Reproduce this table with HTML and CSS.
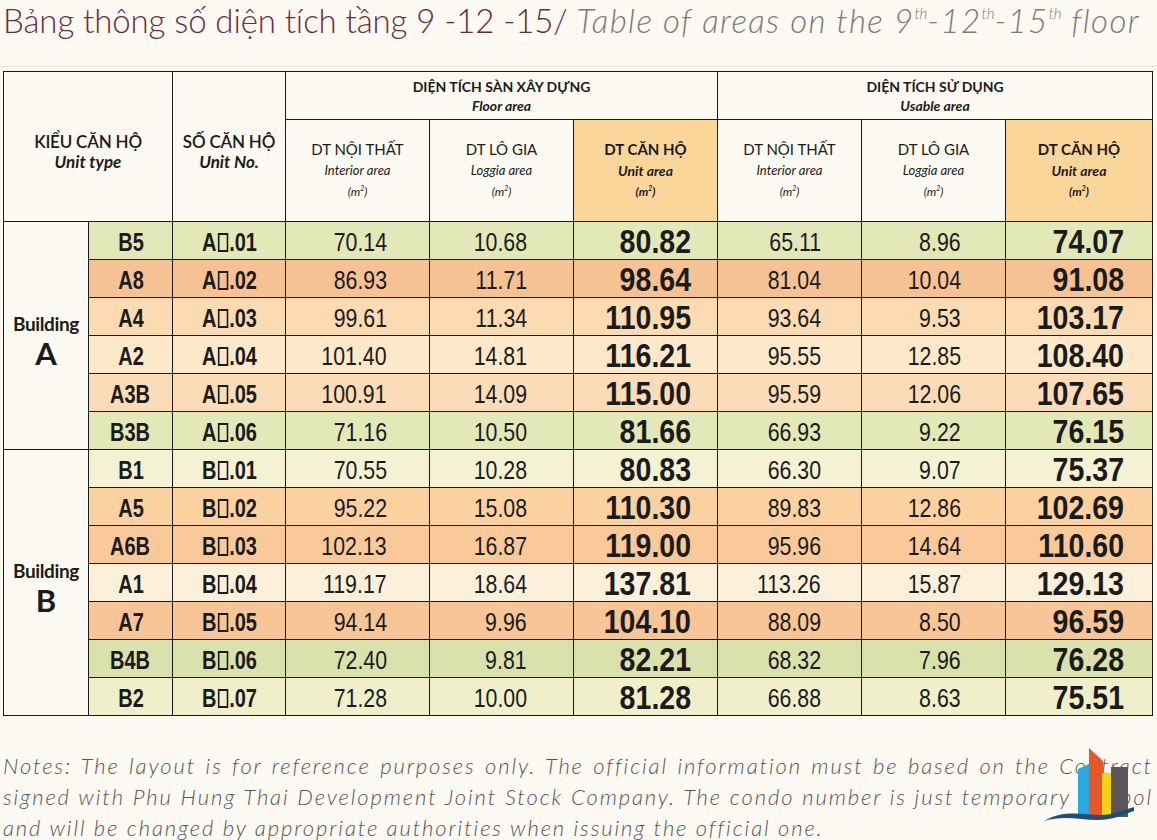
FILE: index.html
```html
<!DOCTYPE html>
<html lang="vi">
<head>
<meta charset="utf-8">
<title>Bảng thông số diện tích tầng 9-12-15</title>
<link rel="stylesheet" href="styles.css">
</head>
<body>
<div class="page">
  <h1 class="title"><span class="vi">Bảng thông số diện tích tầng 9 -12 -15/</span> <span class="en">Table of areas on the 9<sup>th</sup>-12<sup>th</sup>-15<sup>th</sup> floor</span></h1>
  <div class="rule"></div>
  <table class="areas">
    <colgroup>
      <col class="c-bld"><col class="c-type"><col class="c-no">
      <col class="c-v"><col class="c-v"><col class="c-v2">
      <col class="c-v"><col class="c-v"><col class="c-v3">
    </colgroup>
    <thead>
      <tr class="h1">
        <th colspan="2" rowspan="2" class="hd"><div class="hv">KIỂU CĂN HỘ</div><div class="he">Unit type</div></th>
        <th rowspan="2" class="hd"><div class="hv">SỐ CĂN HỘ</div><div class="he">Unit No.</div></th>
        <th colspan="3" class="grp"><div class="gv">DIỆN TÍCH SÀN XÂY DỰNG</div><div class="ge">Floor area</div></th>
        <th colspan="3" class="grp"><div class="gv">DIỆN TÍCH SỬ DỤNG</div><div class="ge">Usable area</div></th>
      </tr>
      <tr class="h2">
        <th class="sub"><div class="sv">DT NỘI THẤT</div><div class="se">Interior area</div><div class="su">(m<sup>2</sup>)</div></th>
        <th class="sub"><div class="sv">DT LÔ GIA</div><div class="se">Loggia area</div><div class="su">(m<sup>2</sup>)</div></th>
        <th class="sub hot"><div class="sv">DT CĂN HỘ</div><div class="se">Unit area</div><div class="su">(m<sup>2</sup>)</div></th>
        <th class="sub"><div class="sv">DT NỘI THẤT</div><div class="se">Interior area</div><div class="su">(m<sup>2</sup>)</div></th>
        <th class="sub"><div class="sv">DT LÔ GIA</div><div class="se">Loggia area</div><div class="su">(m<sup>2</sup>)</div></th>
        <th class="sub hot"><div class="sv">DT CĂN HỘ</div><div class="se">Unit area</div><div class="su">(m<sup>2</sup>)</div></th>
      </tr>
    </thead>
    <tbody>
      <tr class="g1"><td rowspan="6" class="bld"><div class="bw">Building</div><div class="bl">A</div></td><td class="ty"><span>B5</span></td><td class="no"><span>A<i class="box"></i>.01</span></td><td class="fi"><span>70.14</span></td><td class="fl"><span>10.68</span></td><td class="fu"><span>80.82</span></td><td class="ui"><span>65.11</span></td><td class="ul"><span>8.96</span></td><td class="uu"><span>74.07</span></td></tr>
      <tr class="o1"><td class="ty"><span>A8</span></td><td class="no"><span>A<i class="box"></i>.02</span></td><td class="fi"><span>86.93</span></td><td class="fl"><span>11.71</span></td><td class="fu"><span>98.64</span></td><td class="ui"><span>81.04</span></td><td class="ul"><span>10.04</span></td><td class="uu"><span>91.08</span></td></tr>
      <tr class="o2"><td class="ty"><span>A4</span></td><td class="no"><span>A<i class="box"></i>.03</span></td><td class="fi"><span>99.61</span></td><td class="fl"><span>11.34</span></td><td class="fu"><span>110.95</span></td><td class="ui"><span>93.64</span></td><td class="ul"><span>9.53</span></td><td class="uu"><span>103.17</span></td></tr>
      <tr class="o3"><td class="ty"><span>A2</span></td><td class="no"><span>A<i class="box"></i>.04</span></td><td class="fi"><span>101.40</span></td><td class="fl"><span>14.81</span></td><td class="fu"><span>116.21</span></td><td class="ui"><span>95.55</span></td><td class="ul"><span>12.85</span></td><td class="uu"><span>108.40</span></td></tr>
      <tr class="o4"><td class="ty"><span>A3B</span></td><td class="no"><span>A<i class="box"></i>.05</span></td><td class="fi"><span>100.91</span></td><td class="fl"><span>14.09</span></td><td class="fu"><span>115.00</span></td><td class="ui"><span>95.59</span></td><td class="ul"><span>12.06</span></td><td class="uu"><span>107.65</span></td></tr>
      <tr class="g1"><td class="ty"><span>B3B</span></td><td class="no"><span>A<i class="box"></i>.06</span></td><td class="fi"><span>71.16</span></td><td class="fl"><span>10.50</span></td><td class="fu"><span>81.66</span></td><td class="ui"><span>66.93</span></td><td class="ul"><span>9.22</span></td><td class="uu"><span>76.15</span></td></tr>
      <tr class="g2"><td rowspan="7" class="bld"><div class="bw">Building</div><div class="bl">B</div></td><td class="ty"><span>B1</span></td><td class="no"><span>B<i class="box"></i>.01</span></td><td class="fi"><span>70.55</span></td><td class="fl"><span>10.28</span></td><td class="fu"><span>80.83</span></td><td class="ui"><span>66.30</span></td><td class="ul"><span>9.07</span></td><td class="uu"><span>75.37</span></td></tr>
      <tr class="o5"><td class="ty"><span>A5</span></td><td class="no"><span>B<i class="box"></i>.02</span></td><td class="fi"><span>95.22</span></td><td class="fl"><span>15.08</span></td><td class="fu"><span>110.30</span></td><td class="ui"><span>89.83</span></td><td class="ul"><span>12.86</span></td><td class="uu"><span>102.69</span></td></tr>
      <tr class="o6"><td class="ty"><span>A6B</span></td><td class="no"><span>B<i class="box"></i>.03</span></td><td class="fi"><span>102.13</span></td><td class="fl"><span>16.87</span></td><td class="fu"><span>119.00</span></td><td class="ui"><span>95.96</span></td><td class="ul"><span>14.64</span></td><td class="uu"><span>110.60</span></td></tr>
      <tr class="o7"><td class="ty"><span>A1</span></td><td class="no"><span>B<i class="box"></i>.04</span></td><td class="fi"><span>119.17</span></td><td class="fl"><span>18.64</span></td><td class="fu"><span>137.81</span></td><td class="ui"><span>113.26</span></td><td class="ul"><span>15.87</span></td><td class="uu"><span>129.13</span></td></tr>
      <tr class="o8"><td class="ty"><span>A7</span></td><td class="no"><span>B<i class="box"></i>.05</span></td><td class="fi"><span>94.14</span></td><td class="fl"><span>9.96</span></td><td class="fu"><span>104.10</span></td><td class="ui"><span>88.09</span></td><td class="ul"><span>8.50</span></td><td class="uu"><span>96.59</span></td></tr>
      <tr class="g3"><td class="ty"><span>B4B</span></td><td class="no"><span>B<i class="box"></i>.06</span></td><td class="fi"><span>72.40</span></td><td class="fl"><span>9.81</span></td><td class="fu"><span>82.21</span></td><td class="ui"><span>68.32</span></td><td class="ul"><span>7.96</span></td><td class="uu"><span>76.28</span></td></tr>
      <tr class="g4"><td class="ty"><span>B2</span></td><td class="no"><span>B<i class="box"></i>.07</span></td><td class="fi"><span>71.28</span></td><td class="fl"><span>10.00</span></td><td class="fu"><span>81.28</span></td><td class="ui"><span>66.88</span></td><td class="ul"><span>8.63</span></td><td class="uu"><span>75.51</span></td></tr>
    </tbody>
  </table>
  <div class="notes">
    <span class="ln">Notes: The layout is for reference purposes only. The official information must be based on the Contract</span>
    <span class="ln">signed with Phu Hung Thai Development Joint Stock Company. The condo number is just temporary symbol</span>
    <span class="ln last">and will be changed by appropriate authorities when issuing the official one.</span>
  </div>
  <svg class="logo" viewBox="0 0 100 80" width="100" height="80" aria-hidden="true">
    <polygon points="42,24 53,19 53,70 42,70" fill="#29a9e0"/>
    <polygon points="53,3 67,16 67,70 53,70" fill="#e8572a"/>
    <polygon points="66,28 75,28 75,70 66,70" fill="#f7d117"/>
    <polygon points="75,22 92,22 92,72 75,72" fill="#5a5556"/>
    <path d="M8 76 C 28 64, 48 70, 64 70 C 78 70, 90 64, 98 62 L 98 66 C 88 69, 78 75, 62 75 C 44 75, 28 70, 8 76 Z" fill="#1d4f7a"/>
  </svg>
</div>
</body>
</html>
```
FILE: styles.css
```css
html, body {
  margin: 0;
  padding: 0;
  background: #fdf9f3;
}
.page {
  position: relative;
  width: 1157px;
  height: 840px;
  overflow: hidden;
  background: #fdf9f3;
}
.title {
  margin: 0;
  padding: 0 0 0 3px;
  height: 66px;
  box-sizing: border-box;
  font-family: Lato, "Open Sans", sans-serif;
  font-weight: 300;
  font-size: 33px;
  line-height: 40px;
  white-space: nowrap;
}
.title .vi { color: #6b2b3f; letter-spacing: -0.1px; }
.title .en { color: #7a7a7a; font-style: italic; letter-spacing: 1.4px; }
.title sup { font-size: 15px; vertical-align: 14px; line-height: 0; letter-spacing: 0; }
.rule {
  height: 1px;
  background: #ebe4d9;
  margin-bottom: 4px;
}
.areas {
  margin-left: 3px;
  width: 1150px;
  table-layout: fixed;
  border-collapse: collapse;
  font-family: "Liberation Sans", Arial, sans-serif;
  color: #1b1b1b;
}
.c-bld { width: 85px; }
.c-type { width: 84px; }
.c-no { width: 113px; }
.c-v { width: 144px; }
.c-v2 { width: 144px; }
.c-v3 { width: 147px; }
.areas th, .areas td {
  border: 1.5px solid #1a1a1a;
  padding: 0;
}
.areas th {
  font-family: Lato, "Noto Sans", sans-serif;
  font-weight: 400;
  background: #fdf9f3;
  text-align: center;
  vertical-align: middle;
}
.h1 { height: 48px; }
.h2 { height: 102px; }
.areas th.hd { padding-top: 9px; }
.hd .hv { font-size: 17px; font-weight: 600; letter-spacing: -0.2px; line-height: 21px; }
.hd .he { font-size: 17px; font-weight: 700; font-style: italic; line-height: 20px; }
.grp .gv { font-size: 14px; font-weight: 700; line-height: 19px; }
.grp .ge { font-size: 14px; font-weight: 700; font-style: italic; line-height: 19px; }
.sub .sv { font-size: 15px; line-height: 21px; }
.sub .se { font-size: 13px; font-style: italic; line-height: 21px; }
.sub .su { font-size: 12px; font-style: italic; line-height: 21px; }
.sub sup { font-size: 7px; vertical-align: 5px; line-height: 0; }
.sub.hot { background: #fbd69b; }
.sub.hot .sv, .sub.hot .su { font-weight: 700; }
.sub.hot .se { font-weight: 700; font-size: 14px; }
.areas tbody tr { height: 38px; }
.areas td {
  font-size: 26px;
  line-height: 30px;
  text-align: right;
  vertical-align: middle;
  white-space: nowrap;
}
.areas td > span {
  display: inline-block;
  transform: scaleX(0.82);
  transform-origin: right center;
  padding-top: 3px;
}
.box {
  display: inline-block;
  width: 13px;
  height: 19px;
  border: 2.5px solid #1b1b1b;
  box-sizing: border-box;
  margin: 0 1px -1px 2px;
}
.areas td.bld {
  background: #fdf9f3;
  text-align: center;
  font-family: Lato, "Noto Sans", sans-serif;
  padding-top: 8px;
}
.bw { font-size: 19px; font-weight: 700; line-height: 22px; letter-spacing: -0.4px; }
.bl { font-size: 31px; font-weight: 700; line-height: 28px; margin-top: 4px; }
.areas td.ty, .areas td.no { text-align: center; font-weight: 700; font-size: 25px; }
.areas td.ty > span, .areas td.no > span { transform: scaleX(0.8); transform-origin: center center; }
.fi { padding-right: 42px !important; }
.fl { padding-right: 46px !important; }
.fu { padding-right: 26px !important; font-weight: 700; font-size: 34px !important; }
.ui { padding-right: 40px !important; }
.ul { padding-right: 44px !important; }
.uu { padding-right: 28px !important; font-weight: 700; font-size: 34px !important; }
.fu > span, .uu > span { transform: scaleX(0.84) !important; padding-top: 0 !important; }
.g1 td { background: #e2e8b7; }
.g2 td { background: #f4f2d3; }
.g3 td { background: #d9e1ad; }
.g4 td { background: #eff0c9; }
.o1 td { background: #f6c293; }
.o2 td { background: #fcdbb3; }
.o3 td { background: #fde9c9; }
.o4 td { background: #fbdcb8; }
.o5 td { background: #fbd1a0; }
.o6 td { background: #f9c99a; }
.o7 td { background: #fdf0db; }
.o8 td { background: #f8c596; }
.areas tbody td.bld { background: #fdf9f3; }
.notes {
  margin: 34px 4px 0 3px;
  font-family: Lato, "Open Sans", sans-serif;
  font-weight: 300;
  font-style: italic;
  font-size: 22px;
  letter-spacing: 1.9px;
  line-height: 31px;
  color: #555;
}
.notes .ln {
  display: block;
  text-align: justify;
  text-align-last: justify;
}
.notes .ln.last { text-align-last: left; }
.logo {
  position: absolute;
  left: 1036px;
  top: 745px;
}
```
